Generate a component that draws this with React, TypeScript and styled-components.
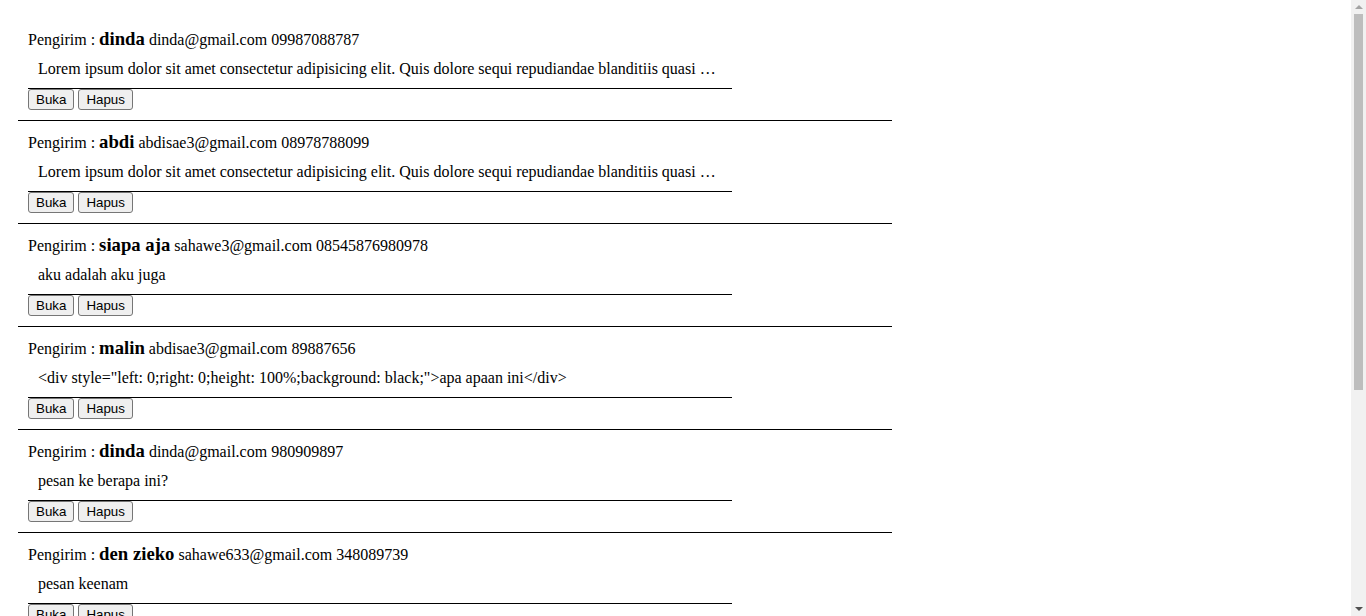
import React from "react";
import styled, { createGlobalStyle } from "styled-components";

const Global = createGlobalStyle`
  body {
    margin: 8px;
    background: #fff;
    color: #000;
    font-family: "Liberation Serif", "Times New Roman", serif;
    font-size: 16px;
  }
`;

const List = styled.div`
  padding: 10px;
  width: 874px;
`;

const Item = styled.div`
  padding: 10px;
  border-bottom: 1px solid #000;
`;

const Header = styled.div`
  line-height: 21px;
  font-size: 16px;
`;

const Name = styled.b`
  font-size: 18.72px;
  font-weight: bold;
`;

const Message = styled.div`
  width: 684px;
  padding: 10px;
  line-height: 18px;
  white-space: nowrap;
  overflow: hidden;
  text-overflow: ellipsis;
  border-bottom: 1px solid #000;
`;

const Actions = styled.div`
  display: flex;
  gap: 4px;
`;

const Button = styled.button`
  font-family: "Liberation Sans", Arial, sans-serif;
  font-size: 13.33px;
  line-height: 15px;
  padding: 2px 7px;
  height: 21px;
  border: 1px solid #767676;
  border-radius: 3px;
  background: #efefef;
  color: #000;
`;

/* Imitation of the browser's vertical scrollbar, drawn over the page edge */
const ScrollTrack = styled.div`
  position: fixed;
  top: 0;
  right: 0;
  width: 15px;
  height: 100vh;
  background: #f1f1f1;
  display: flex;
  flex-direction: column;
  align-items: center;
`;

const ScrollArrow = styled.div<{ $down?: boolean; $color: string }>`
  width: 0;
  height: 0;
  margin: 5px 0;
  border-left: 4px solid transparent;
  border-right: 4px solid transparent;
  ${(p) =>
    p.$down
      ? `border-top: 4px solid ${p.$color};`
      : `border-bottom: 4px solid ${p.$color};`}
`;

const ScrollThumb = styled.div`
  width: 9px;
  height: 376px;
  margin-top: 0;
  background: #bdbdbd;
`;

const Spacer = styled.div`
  flex: 1;
`;

const lorem =
  "Lorem ipsum dolor sit amet consectetur adipisicing elit. Quis dolore sequi repudiandae blanditiis quasi dolorum eveniet nisi voluptas laboriosam officiis ratione praesentium.";

const messages = [
  { name: "dinda", email: "dinda@gmail.com", phone: "09987088787", text: lorem },
  { name: "abdi", email: "abdisae3@gmail.com", phone: "08978788099", text: lorem },
  { name: "siapa aja", email: "sahawe3@gmail.com", phone: "08545876980978", text: "aku adalah aku juga" },
  {
    name: "malin",
    email: "abdisae3@gmail.com",
    phone: "89887656",
    text: '<div style="left: 0;right: 0;height: 100%;background: black;">apa apaan ini</div>',
  },
  { name: "dinda", email: "dinda@gmail.com", phone: "980909897", text: "pesan ke berapa ini?" },
  { name: "den zieko", email: "sahawe633@gmail.com", phone: "348089739", text: "pesan keenam" },
  { name: "abdi", email: "abdisae3@gmail.com", phone: "08978788099", text: "pesan ketujuh" },
  { name: "siapa aja", email: "sahawe3@gmail.com", phone: "0854587698", text: "pesan kedelapan" },
  { name: "malin", email: "abdisae3@gmail.com", phone: "89887656", text: "pesan kesembilan" },
];

export default function App() {
  return (
    <>
      <Global />
      <List>
        {messages.map((m, i) => (
          <Item key={i}>
            <Header>
              Pengirim : <Name>{m.name}</Name> {m.email} {m.phone}
            </Header>
            <Message>{m.text}</Message>
            <Actions>
              <Button>Buka</Button>
              <Button>Hapus</Button>
            </Actions>
          </Item>
        ))}
      </List>
      <ScrollTrack>
        <ScrollArrow $color="#a3a3a3" />
        <ScrollThumb />
        <Spacer />
        <ScrollArrow $down $color="#505050" />
      </ScrollTrack>
    </>
  );
}
